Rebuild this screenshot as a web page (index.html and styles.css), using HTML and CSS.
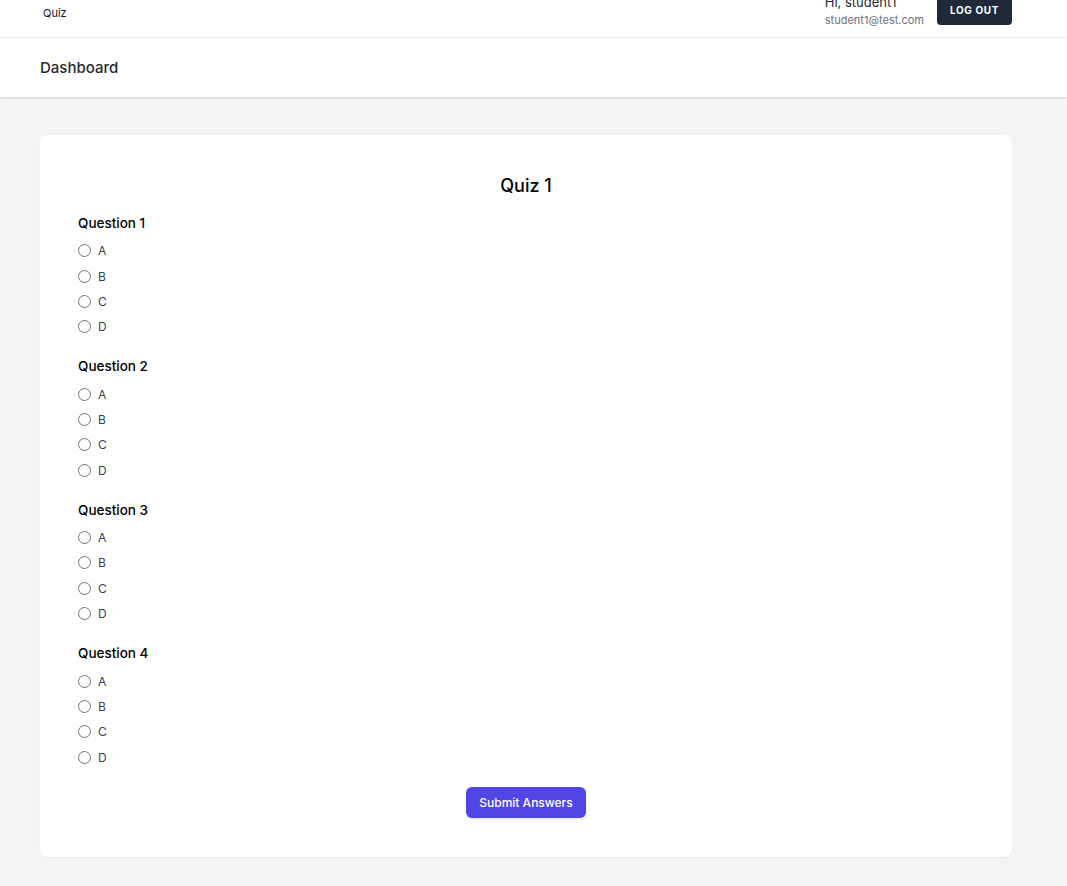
FILE: index.html
```html
<!DOCTYPE html>
<html lang="en">
<head>
<meta charset="utf-8">
<title>Quiz</title>
<link rel="stylesheet" href="styles.css">
</head>
<body>
<nav class="nav">
  <div class="wrap nav-inner">
    <div class="logo">Quiz</div>
    <div class="user">
      <div class="user-info">
        <div class="user-name">Hi, student1</div>
        <div class="user-email">student1@test.com</div>
      </div>
      <button class="logout">LOG OUT</button>
    </div>
  </div>
</nav>
<header class="header">
  <div class="wrap">
    <h2 class="header-title">Dashboard</h2>
  </div>
</header>
<main class="main">
  <div class="wrap">
    <div class="card">
      <h1 class="quiz-title">Quiz 1</h1>
      <form class="quiz">
        <div class="question">
          <div class="q-title">Question 1</div>
          <label class="opt"><span class="radio"></span>A</label>
          <label class="opt"><span class="radio"></span>B</label>
          <label class="opt"><span class="radio"></span>C</label>
          <label class="opt"><span class="radio"></span>D</label>
        </div>
        <div class="question">
          <div class="q-title">Question 2</div>
          <label class="opt"><span class="radio"></span>A</label>
          <label class="opt"><span class="radio"></span>B</label>
          <label class="opt"><span class="radio"></span>C</label>
          <label class="opt"><span class="radio"></span>D</label>
        </div>
        <div class="question">
          <div class="q-title">Question 3</div>
          <label class="opt"><span class="radio"></span>A</label>
          <label class="opt"><span class="radio"></span>B</label>
          <label class="opt"><span class="radio"></span>C</label>
          <label class="opt"><span class="radio"></span>D</label>
        </div>
        <div class="question">
          <div class="q-title">Question 4</div>
          <label class="opt"><span class="radio"></span>A</label>
          <label class="opt"><span class="radio"></span>B</label>
          <label class="opt"><span class="radio"></span>C</label>
          <label class="opt"><span class="radio"></span>D</label>
        </div>
        <div class="submit-row">
          <button type="button" class="submit">Submit Answers</button>
        </div>
      </form>
    </div>
  </div>
</main>
</body>
</html>
```

FILE: styles.css
```css
* { box-sizing: border-box; }
html, body { margin: 0; padding: 0; }
body {
  font-family: Inter, "Noto Sans", "Liberation Sans", sans-serif;
  background: #f3f4f6;
  color: #111827;
  min-height: 886px;
}
.wrap {
  padding-left: 40px;
  padding-right: 55px;
}
.nav {
  background: #fff;
  border-bottom: 1px solid #f0f1f3;
  height: 38px;
  overflow: hidden;
}
.nav-inner {
  display: flex;
  justify-content: space-between;
  align-items: flex-start;
  height: 37px;
}
.logo {
  font-size: 11px;
  line-height: 14px;
  color: #111827;
  margin-top: 6px;
  padding-left: 3px;
}
.user {
  display: flex;
  align-items: flex-start;
  margin-top: -7px;
  gap: 13px;
}
.user-info {
  display: flex;
  flex-direction: column;
}
.user-name {
  font-size: 13px;
  line-height: 18px;
  color: #1e293b;
}
.user-email {
  font-size: 11px;
  line-height: 16px;
  color: #6b7280;
  margin-top: 1px;
}
.logout {
  font-family: inherit;
  background: #1f2937;
  color: #fff;
  border: 0;
  border-radius: 4px;
  height: 32px;
  width: 75px;
  font-size: 10px;
  font-weight: 700;
  letter-spacing: 0.6px;
  padding: 1px 0 0;
}
.header {
  background: #fff;
  height: 59px;
  box-shadow: 0 1px 3px rgba(0,0,0,0.1), 0 1px 2px rgba(0,0,0,0.06);
  display: flex;
  align-items: center;
}
.header .wrap { width: 100%; }
.header-title {
  margin: 0;
  font-size: 15px;
  line-height: 18px;
  font-weight: 500;
  color: #1f2937;
}
.main {
  padding-top: 38px;
  padding-bottom: 29px;
}
.card {
  background: #fff;
  border-radius: 8px;
  box-shadow: 0 1px 2px rgba(0,0,0,0.05);
  padding: 37px 38px 39px;
}
.quiz-title {
  margin: 0 0 13px;
  text-align: center;
  font-size: 18px;
  line-height: 28px;
  font-weight: 500;
  color: #000;
}
.question {
  margin-bottom: 16.9px;
}
.q-title {
  font-size: 13.5px;
  line-height: 20px;
  font-weight: 500;
  color: #000;
  margin-bottom: 5px;
}
.opt {
  display: flex;
  align-items: center;
  height: 25.4px;
  font-size: 12px;
  color: #374151;
}
.radio {
  width: 13px;
  height: 13px;
  border: 1px solid #6b7280;
  border-radius: 50%;
  margin-right: 7px;
  flex: none;
}
.submit-row {
  display: flex;
  justify-content: center;
}
.submit {
  font-family: inherit;
  background: #4f46e5;
  color: #fff;
  border: 0;
  border-radius: 6px;
  height: 31px;
  width: 120px;
  font-size: 12px;
  font-weight: 500;
  box-shadow: 0 1px 3px rgba(0,0,0,0.12);
}
```
